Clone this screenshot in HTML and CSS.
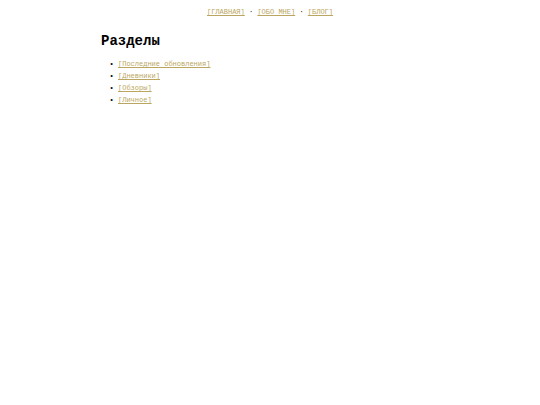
FILE: index.html
```html
<!DOCTYPE html>
<html lang="ru">
<head>
    <meta charset="UTF-8">
    <meta name="viewport" content="width=device-width, initial-scale=1.0">
    <title>Разделы</title>
    <link rel="stylesheet" href="styles.css">
</head>
<body>
    <nav class="menu">
        <a href="#">[ГЛАВНАЯ]</a> · <a href="#">[ОБО МНЕ]</a> · <a href="#">[БЛОГ]</a>
    </nav>

    <main class="content">
        <h1>Разделы</h1>
        <ul class="sections">
            <li><a href="#">[Последние обновления]</a></li>
            <li><a href="#">[Дневники]</a></li>
            <li><a href="#">[Обзоры]</a></li>
            <li><a href="#">[Личное]</a></li>
        </ul>
    </main>
</body>
</html>
```

FILE: styles.css
```css
body {
    font-family: "Courier New", "Liberation Mono", monospace;
    font-size: 7px;
    line-height: 12px;
    max-width: 338px;
    margin: 0 auto;
    padding: 6px;
    background-color: #fff;
    color: #000;
}
.menu {
    text-align: center;
}
h1 {
    font-size: 14px;
    line-height: 20px;
    margin: 13px 0 7px;
}
.sections {
    list-style-type: "• ";
    margin: 0;
    padding-left: 17px;
}
a {
    color: #baa660;
}
```
